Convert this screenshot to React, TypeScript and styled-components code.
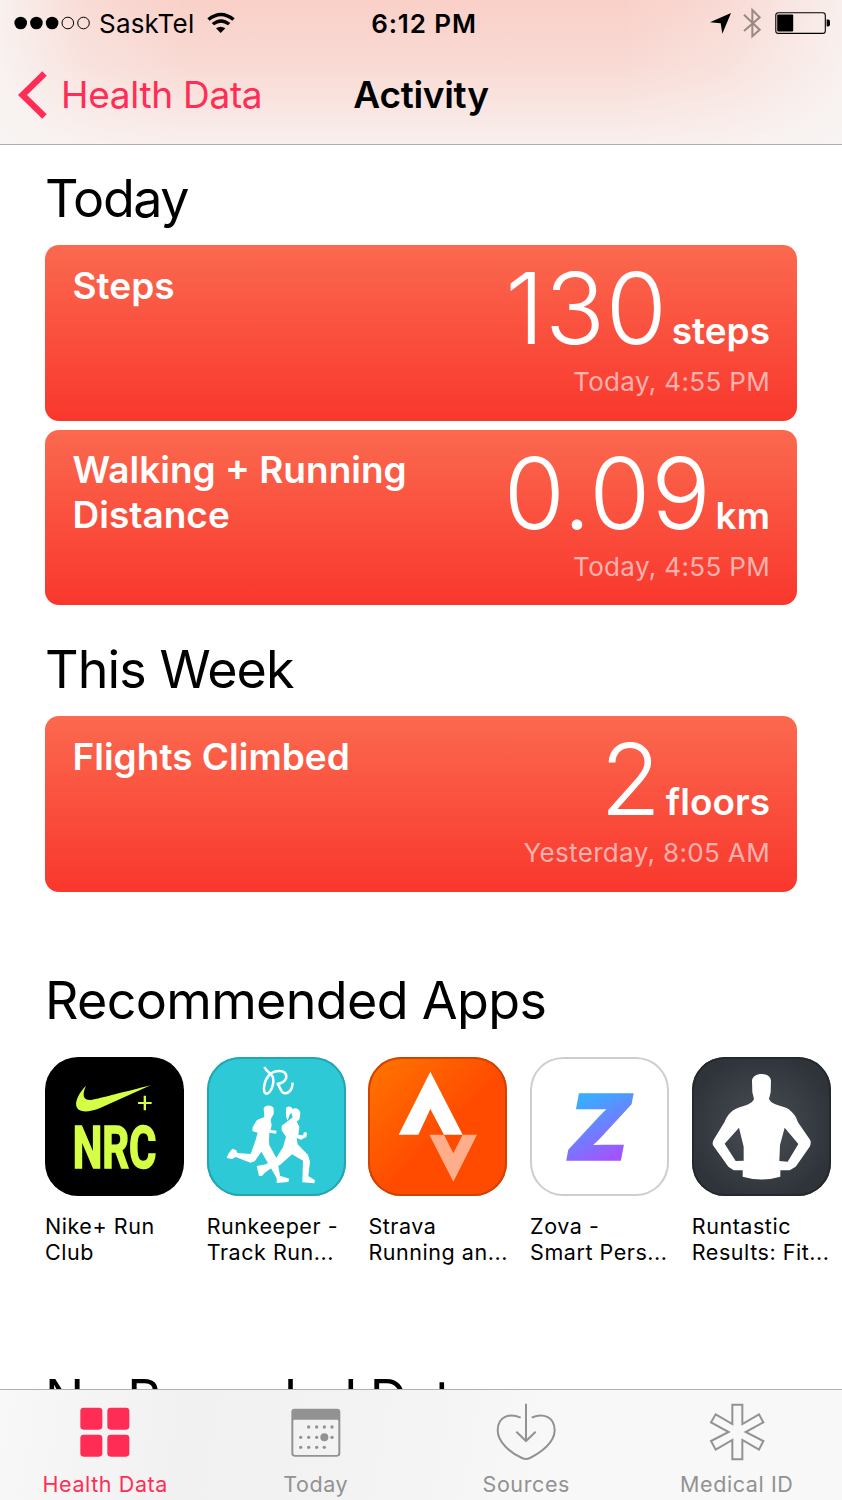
import type { ReactNode } from "react"
import styled, { createGlobalStyle } from "styled-components"

const GlobalStyle = createGlobalStyle`
  * {
    box-sizing: border-box;
  }

  body {
    margin: 0;
    background: #fff;
    color: #000;
    font-family: Inter, "Liberation Sans", sans-serif;
  }
`

const Screen = styled.div`
  display: flex;
  flex-direction: column;
  width: 842px;
  height: 1500px;
  overflow: hidden;
`

const Header = styled.header`
  flex: none;
  height: 145px;
  border-bottom: 1px solid #b2adac;
  background:
    linear-gradient(90deg, rgba(248, 246, 245, 0.85) 0, rgba(248, 246, 245, 0.3) 10%, rgba(248, 246, 245, 0) 22%, rgba(248, 246, 245, 0) 74%, rgba(248, 246, 245, 0.25) 86%, rgba(248, 246, 245, 0.8) 100%),
    linear-gradient(180deg, #f9d0c8 0, #f9dad4 45%, #f9efed 100%);
`

const StatusBar = styled.div`
  display: grid;
  grid-template-columns: 1fr auto 1fr;
  align-items: center;
  height: 46px;
  padding: 0 12px 0 14px;
  font-size: 26px;
`

const StatusLeft = styled.div`
  display: flex;
  align-items: center;
`

const Carrier = styled.span`
  margin: 0 13px 0 8px;
  letter-spacing: 0.2px;
`

const Time = styled.span`
  margin-left: 4px;
  font-weight: 600;
  letter-spacing: 0.9px;
`

const StatusRight = styled.div`
  display: flex;
  align-items: center;
  justify-content: flex-end;
`

const NavBar = styled.nav`
  display: grid;
  grid-template-columns: 1fr auto 1fr;
  align-items: center;
  height: 97px;
  padding: 0 18px;
  font-size: 37px;
  letter-spacing: -0.3px;
`

const BackButton = styled.button`
  display: flex;
  align-items: center;
  gap: 14px;
  padding: 0;
  border: 0;
  background: none;
  color: #ff2d55;
  font: inherit;
  letter-spacing: inherit;
  white-space: nowrap;
`

const NavTitle = styled.span`
  font-weight: 600;
`

const Content = styled.main`
  flex: 1;
  min-height: 0;
  padding: 24px 45px 0;
  overflow: hidden;
`

const Section = styled.section<{ $gap: number }>`
  margin-bottom: ${({ $gap }) => $gap}px;
`

const SectionTitle = styled.h2<{ $space?: number; $tracking?: number }>`
  margin: 0 0 ${({ $space = 16 }) => $space}px;
  font-size: 52px;
  font-weight: 400;
  line-height: 60px;
  letter-spacing: ${({ $tracking = -0.65 }) => $tracking}px;
  white-space: nowrap;
`

const CardList = styled.div`
  display: flex;
  flex-direction: column;
  gap: 9px;
`

const Card = styled.article`
  display: flex;
  justify-content: space-between;
  height: 175.5px;
  padding: 17px 27px 0 27.5px;
  border-radius: 14px;
  background: linear-gradient(180deg, #fb694f, #f9372d);
  color: #fff;
`

const CardTitle = styled.h3`
  width: 350px;
  margin: 0;
  padding-top: 0.6px;
  font-size: 37px;
  font-weight: 600;
  line-height: 45px;
`

const Reading = styled.div`
  display: flex;
  flex-direction: column;
  align-items: flex-end;
`

const Amount = styled.div`
  display: flex;
  align-items: baseline;
  height: 97px;
  line-height: 92px;
  white-space: nowrap;
`

const Value = styled.span`
  font-size: 99px;
  font-weight: 280;
  letter-spacing: 0.8px;
`

const Unit = styled.span`
  margin-left: 4px;
  font-size: 37px;
  font-weight: 600;
`

const Timestamp = styled.div`
  color: rgba(255, 255, 255, 0.6);
  font-size: 26px;
  line-height: 45px;
  letter-spacing: 0.35px;
`

const AppRow = styled.div`
  display: flex;
  gap: 22.7px;
`

const AppTile = styled.div`
  flex: none;
  width: 139px;
`

const AppIcon = styled.div<{ $background: string; $edge?: string }>`
  height: 139px;
  border-radius: 33px;
  background: ${({ $background }) => $background};
  box-shadow: inset 0 0 0 2px ${({ $edge = "transparent" }) => $edge};
  overflow: hidden;

  svg {
    display: block;
    width: 139px;
    height: 139px;
  }
`

const AppName = styled.div`
  margin-top: 17px;
  font-size: 21.5px;
  line-height: 26px;
  letter-spacing: 0.55px;
  white-space: pre;
`

const TabBar = styled.footer`
  flex: none;
  display: grid;
  grid-template-columns: repeat(4, 1fr);
  height: 111px;
  border-top: 1px solid #b0b0b0;
  background: linear-gradient(100deg, #f8f8f8 0, #f1f1f1 22%, #f3f3f3 45%, #f8f8f8 65%);
`

const Tab = styled.div<{ $active?: boolean }>`
  display: flex;
  flex-direction: column;
  align-items: center;
  padding-top: 13px;
  color: ${({ $active }) => ($active ? "#ff2d55" : "#929292")};
  font-size: 21.5px;
  line-height: 28px;
  letter-spacing: 0.6px;

  svg {
    margin-bottom: 9px;
  }
`

const SignalDots = () => (
  <svg width="77" height="14" viewBox="0 0 77 14">
    {[6.7, 22.4, 38.1].map((x) => (
      <circle key={x} cx={x} cy="7" r="6.3" />
    ))}
    {[53.8, 69.5].map((x) => (
      <circle key={x} cx={x} cy="7" r="5.8" fill="none" stroke="#000" />
    ))}
  </svg>
)

const Wifi = () => (
  <svg width="28" height="22" viewBox="621 34 84 66">
    <path d="M622 53Q663 20 704 53L697 60Q663 33 629 60Z" />
    <path d="M635 67Q663 44 691 67L684 74Q663 58 642 74Z" />
    <path d="M648 83Q662 73 676 83L662 97Z" />
  </svg>
)

const LocationArrow = () => (
  <svg width="21" height="21" viewBox="865 39 63 63">
    <path d="M928 39L902 101L897 70L865 67Z" />
  </svg>
)

const BluetoothSvg = styled.svg`
  margin: 0 13px 0 11px;
`

const Bluetooth = () => (
  <BluetoothSvg width="20" height="32" viewBox="962 20 60 96">
    <path d="M968 43L1015 88L993 108V29L1015 51L968 92" fill="none" stroke="#9b8985" strokeWidth="6" />
  </BluetoothSvg>
)

const Battery = () => (
  <svg width="55" height="23" viewBox="0 0 55 23">
    <rect x="0.8" y="0.8" width="49.5" height="20.6" rx="2.5" fill="none" stroke="#000" strokeWidth="1.1" />
    <rect x="2.2" y="2.6" width="16" height="17" rx="1" />
    <path d="M51.6 7.5H53q2 0 2 2v3q0 2-2 2h-1.4Z" />
  </svg>
)

const Chevron = () => (
  <svg width="29" height="48" viewBox="0 0 29 48">
    <path d="M26.5 2.5L4.5 24L26.5 45.5" fill="none" stroke="currentColor" strokeWidth="6.4" />
  </svg>
)

const NikeArt = () => (
  <svg viewBox="45 36 417 417" fill="#d4ff45">
    <path d="M168 122C156 148 158 167 184 165C193 164 204 161 362 121L212 188C170 205 144 202 139 183C135 166 150 140 168 122Z" />
    <path d="M324 171h17v-19h7v19h17v6h-17v19h-7v-19h-17Z" />
    <text transform="translate(128 369) scale(0.71 1)" fontFamily="Roboto, sans-serif" fontWeight="700" fontSize="177" stroke="#d4ff45" strokeWidth="5">
      NRC
    </text>
  </svg>
)

const RunkeeperArt = () => (
  <svg viewBox="531 36 417 417" fill="#fff">
    <path d="M703 66C712 84 722 82 728 95C735 115 722 146 708 146C697 140 702 108 716 92C732 74 768 72 769 95C768 110 752 116 740 117C752 117 748 146 766 145C780 144 787 130 788 113" fill="none" stroke="#fff" strokeWidth="7.5" />
    <path d="M701 190C704 179 726 178 731 190L731 208L724 219L722 226L725 240L722 255L740 257L738 266L718 263L717 285L718 300L742 345L750 392L778 401L775 411L740 414L740 400L723 370L694 320L674 349L661 353L617 336L606 342L590 339L595 326L607 311L618 315L622 324L662 327L677 285L683 263L667 258L668 246L681 225L703 216Z" />
    <path d="M768 190C774 181 785 185 788 192C797 186 812 194 811 207L808 224L800 229L808 246L805 269L819 271L822 261L831 263L829 276L813 284L800 279L803 298L834 330L840 350L835 393L855 406L853 415L817 412L819 347L786 328L750 360L720 372L704 384L696 393L687 393L680 363L708 358L728 344L739 338L759 307L768 276L755 256L755 242L779 224L788 217L784 203L779 209L773 227L768 215Z" />
  </svg>
)

const StravaArt = () => (
  <svg viewBox="39 36 417 417">
    <path d="M226 80L323 269H267L226 192L190 269H131Z" fill="#fff" />
    <path d="M223 269H267L295 325L323 269H366L295 410Z" fill="#ffae8c" />
  </svg>
)

const ZovaArt = () => (
  <svg viewBox="526 36 417 417">
    <defs>
      <linearGradient id="zova" x1="0.35" y1="0.2" x2="0.55" y2="0.85">
        <stop offset="0" stopColor="#3aabff" />
        <stop offset="1" stopColor="#a055ff" />
      </linearGradient>
    </defs>
    <text transform="translate(624 344) skewX(-10.6)" fontFamily="Inter, sans-serif" fontWeight="900" fontSize="272" textLength="186" lengthAdjust="spacingAndGlyphs" fill="url(#zova)" stroke="url(#zova)" strokeWidth="5">
      Z
    </text>
  </svg>
)

const RuntasticArt = () => (
  <svg viewBox="35 36 417 417" fill="#fff">
    <path
      fillRule="evenodd"
      d="M215 108C216 80 271 80 272 108L271 142L266 162C272 176 291 180 310 186C334 193 348 215 353 232L390 286Q393 296 388 305L346 365L328 376H300V395Q244 412 187 395V376H160L144 365L98 301Q95 294 100 284L133 230C143 207 156 194 178 187C198 180 216 176 221 162L216 142ZM176 248L133 296L166 348L190 347V305ZM313 248L299 300L297 348L322 350L354 297Z"
    />
  </svg>
)

const GridIcon = () => (
  <svg width="50" height="58" viewBox="242 130 150 174" fill="currentColor">
    {[243, 324].map((x) => [144, 225].map((y) => <rect key={`${x}-${y}`} x={x} y={y} width="66" height="66" rx="10" />))}
  </svg>
)

const calendarDots = [
  [928, 202], [952, 202], [975, 202], [998, 202],
  [904, 233], [928, 233], [952, 233], [998, 233],
  [904, 263], [928, 263], [952, 263], [975, 263],
]

const CalendarIcon = () => (
  <svg width="50" height="58" viewBox="875 130 150 174" fill="currentColor">
    <path fillRule="evenodd" d="M886 147H1013Q1023 147 1023 157V281Q1023 291 1013 291H886Q876 291 876 281V157Q876 147 886 147ZM886 180Q882 180 882 184V281Q882 286 887 286H1012Q1017 286 1017 281V184Q1017 180 1013 180Z" />
    {calendarDots.map(([x, y]) => (
      <circle key={`${x}-${y}`} cx={x} cy={y} r="5" />
    ))}
    <circle cx="975" cy="233" r="12" />
  </svg>
)

const SourcesIcon = () => (
  <svg width="62" height="58" viewBox="220 130 186 174" fill="none" stroke="currentColor" strokeWidth="6">
    <path d="M297 174C264 159 228 170 228 212C228 248 267 280 301 295Q313 301 325 295C359 278 399 248 399 212C399 170 363 159 330 174" />
    <path d="M313 132V244M284 216L313 244L342 216" />
  </svg>
)

const MedicalIcon = () => (
  <svg width="56" height="58" viewBox="862 130 168 174" fill="none" stroke="currentColor" strokeWidth="6">
    <path d="M932 135H962V193L1012 164L1025 188L972 217L1025 244L1012 270L962 241V299H932V241L882 270L868 244L921 217L868 188L882 164L932 193Z" />
  </svg>
)

interface MetricProps {
  title: string
  value: string
  unit: string
  time: string
}

const Metric = ({ title, value, unit, time }: MetricProps) => (
  <Card>
    <CardTitle>{title}</CardTitle>
    <Reading>
      <Amount>
        <Value>{value}</Value>
        <Unit>{unit}</Unit>
      </Amount>
      <Timestamp>{time}</Timestamp>
    </Reading>
  </Card>
)

const apps: { name: string; background: string; edge?: string; art: ReactNode }[] = [
  { name: "Nike+ Run\nClub", background: "#000", art: <NikeArt /> },
  { name: "Runkeeper -\nTrack Run...", background: "#2dc9d7", edge: "#26a5b0", art: <RunkeeperArt /> },
  { name: "Strava\nRunning an...", background: "linear-gradient(135deg, #ff7600, #ff4b00 55%)", edge: "#cf4303", art: <StravaArt /> },
  { name: "Zova -\nSmart Pers...", background: "#fff", edge: "#cecece", art: <ZovaArt /> },
  { name: "Runtastic\nResults: Fit...", background: "radial-gradient(#4a4e56, #2f343a 75%)", edge: "#25292e", art: <RuntasticArt /> },
]

export default function App() {
  return (
    <Screen>
      <GlobalStyle />
      <Header>
        <StatusBar>
          <StatusLeft>
            <SignalDots />
            <Carrier>SaskTel</Carrier>
            <Wifi />
          </StatusLeft>
          <Time>6:12 PM</Time>
          <StatusRight>
            <LocationArrow />
            <Bluetooth />
            <Battery />
          </StatusRight>
        </StatusBar>
        <NavBar>
          <BackButton>
            <Chevron />
            Health Data
          </BackButton>
          <NavTitle>Activity</NavTitle>
        </NavBar>
      </Header>
      <Content>
        <Section $gap={35}>
          <SectionTitle $tracking={-1.4}>Today</SectionTitle>
          <CardList>
            <Metric title="Steps" value="130" unit="steps" time="Today, 4:55 PM" />
            <Metric title="Walking + Running Distance" value="0.09" unit="km" time="Today, 4:55 PM" />
          </CardList>
        </Section>
        <Section $gap={79}>
          <SectionTitle $tracking={-0.9}>This Week</SectionTitle>
          <Metric title="Flights Climbed" value="2" unit="floors" time="Yesterday, 8:05 AM" />
        </Section>
        <Section $gap={104.5}>
          <SectionTitle $space={26}>Recommended Apps</SectionTitle>
          <AppRow>
            {apps.map((app) => (
              <AppTile key={app.name}>
                <AppIcon $background={app.background} $edge={app.edge}>
                  {app.art}
                </AppIcon>
                <AppName>{app.name}</AppName>
              </AppTile>
            ))}
          </AppRow>
        </Section>
        <SectionTitle $tracking={-0.95}>No Recorded Data</SectionTitle>
      </Content>
      <TabBar>
        <Tab $active>
          <GridIcon />
          Health Data
        </Tab>
        <Tab>
          <CalendarIcon />
          Today
        </Tab>
        <Tab>
          <SourcesIcon />
          Sources
        </Tab>
        <Tab>
          <MedicalIcon />
          Medical ID
        </Tab>
      </TabBar>
    </Screen>
  )
}
